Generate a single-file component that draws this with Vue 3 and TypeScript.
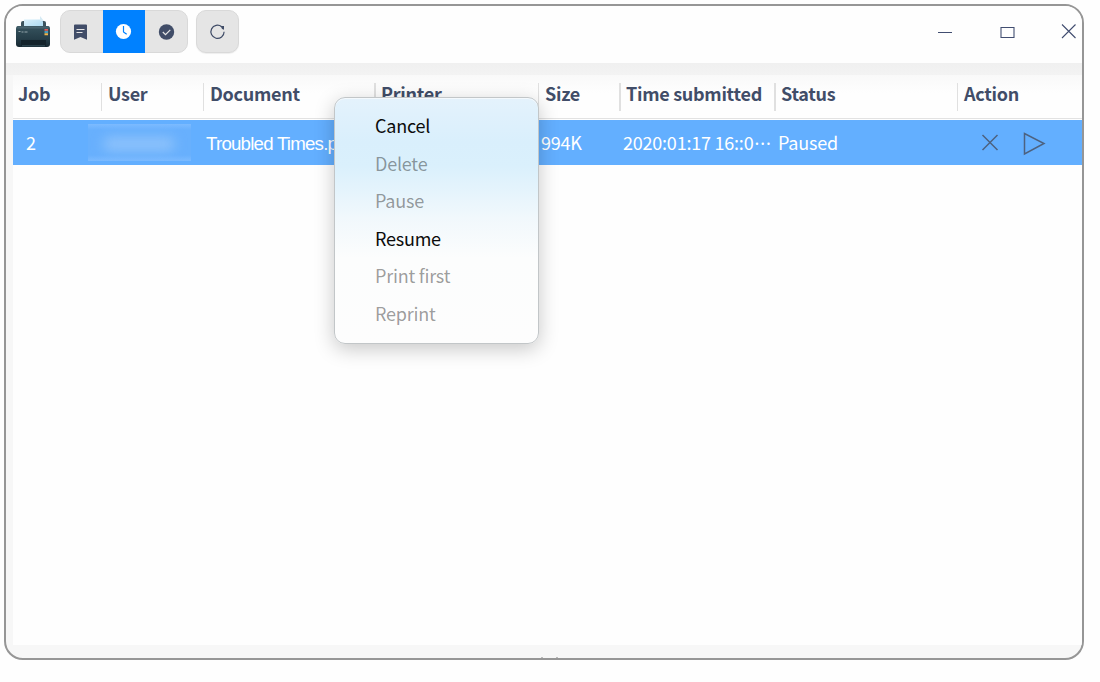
<script setup lang="ts">
interface Column { key: string; label: string }
interface MenuItem { label: string; enabled: boolean }

const columns: Column[] = [
  { key: 'job', label: 'Job' },
  { key: 'user', label: 'User' },
  { key: 'document', label: 'Document' },
  { key: 'printer', label: 'Printer' },
  { key: 'size', label: 'Size' },
  { key: 'time', label: 'Time submitted' },
  { key: 'status', label: 'Status' },
  { key: 'action', label: 'Action' },
]

const menu: MenuItem[] = [
  { label: 'Cancel', enabled: true },
  { label: 'Delete', enabled: false },
  { label: 'Pause', enabled: false },
  { label: 'Resume', enabled: true },
  { label: 'Print first', enabled: false },
  { label: 'Reprint', enabled: false },
]
</script>

<template>
  <main class="window">
    <header class="titlebar">
      <svg class="app-icon" width="36" height="34" viewBox="0 0 36 34">
        <defs>
          <linearGradient id="body" x1="0" y1="0" x2="0" y2="1">
            <stop offset="0" stop-color="#36535e" />
            <stop offset="0.6" stop-color="#263e49" />
            <stop offset="1" stop-color="#172831" />
          </linearGradient>
          <linearGradient id="sheet" x1="0" y1="0" x2="1" y2="1">
            <stop offset="0" stop-color="#d9f0fb" />
            <stop offset="1" stop-color="#a9d8f0" />
          </linearGradient>
        </defs>
        <path d="M6 7q0-2 2-2h21q2 0 2 2v7H6z" fill="#3c535e" />
        <path d="M9 3.500h16l3 2v6H9z" fill="url(#sheet)" />
        <path d="M25 0l4 5h-4z" fill="#d5eaf4" />
        <path d="M3 10h30q2 0 2 3v15q0 3-3 3H4q-3 0-3-3V13q0-3 2-3z" fill="url(#body)" />
        <path d="M3 10.500h30l1 2H2z" fill="#48636e" />
        <path d="M6 24h25v6H6z" fill="#14232b" />
        <path d="M7 29h23v1.500H7z" fill="#2b424c" />
        <path d="M3.500 15.500h2m1 .5h2m1 0h3" stroke="#96a6ad" stroke-width="1" />
        <path d="M29.500 13h3.500v1.800h-3.500z" fill="#e85855" />
        <path d="M29.500 15.300h3.500v1.500h-3.500z" fill="#4eb7e0" />
        <path d="M29.500 17.200h3.500v2h-3.500z" fill="#f3b64a" />
      </svg>
      <nav class="tabs">
        <button class="tab" aria-label="All jobs">
          <svg width="42" height="42" viewBox="0 0 42 42">
            <path d="M13 14.500q0-1 1-1h11q1 0 1 1v14.300l-6.500-2.800-6.500 2.800z" fill="#414d68" />
            <path d="M15.500 18.500h8M15.500 21.500h6" stroke="#e6e6e6" stroke-width="1.200" />
          </svg>
        </button>
        <button class="tab active" aria-label="Queued jobs">
          <svg width="42" height="43" viewBox="0 0 42 43">
            <circle cx="20.500" cy="21.500" r="7.600" fill="#fff" />
            <path d="M20.500 16v6l3.200 2.200" fill="none" stroke="#0081ff" stroke-width="1.200" />
          </svg>
        </button>
        <button class="tab" aria-label="Completed jobs">
          <svg width="42" height="42" viewBox="0 0 42 42">
            <circle cx="21.500" cy="21" r="7.700" fill="#414d68" />
            <path d="M17.800 21l2.700 2.600 4.800-4.800" fill="none" stroke="#e6e6e6" stroke-width="1.200" />
          </svg>
        </button>
      </nav>
      <button class="refresh" aria-label="Refresh">
        <svg width="41" height="41" viewBox="0 0 41 41">
          <path d="M24.700 15.700A6.600 6.600 0 1 0 27.100 20.800" fill="none" stroke="#414d68" stroke-width="1.200" />
          <path d="M23.500 15h3.500v3.700q-2.500-.5-3.500-3.700z" fill="#414d68" />
        </svg>
      </button>
      <div class="controls">
        <svg width="150" height="40" viewBox="0 0 150 40" fill="none" stroke="#414d70" stroke-width="1.100">
          <path d="M6 22.500h14" />
          <path d="M69 17.500h13v10h-13z" />
          <path d="M130 14.500l13.500 13.500M143.500 14.500L130 28" />
        </svg>
      </div>
    </header>

    <div class="band"></div>
    <section class="table">
      <div class="grid head">
        <div v-for="c in columns" :key="c.key" class="th" :class="c.key">{{ c.label }}</div>
      </div>
      <div class="grid row">
        <div class="td number">2</div>
        <div class="td user-cell"><span class="redacted"><i></i></span></div>
        <div class="td doc">Troubled Times.p</div>
        <div class="td"></div>
        <div class="td">994K</div>
        <div class="td">2020:01:17 16::0<span class="dots">···</span></div>
        <div class="td">Paused</div>
        <div class="td actions">
          <svg width="125" height="45" viewBox="0 0 125 45" fill="none" stroke="#4d6280" stroke-width="1.500">
            <path d="M25.500 15l15 15M40.500 15l-15 15" />
            <path d="M67.500 13.500v20.500l19.500-10.500z" />
          </svg>
        </div>
      </div>
    </section>
    <footer class="foot"><i></i><i></i></footer>

    <ul class="menu">
      <li v-for="m in menu" :key="m.label" :class="{ disabled: !m.enabled }">{{ m.label }}</li>
    </ul>
  </main>
</template>

<style>
body {
  background: #fefefe;
}
</style>

<style scoped>
.window {
  position: relative;
  box-sizing: border-box;
  width: 1080px;
  height: 656px;
  margin: 4px;
  border: 2px solid #969696;
  border-radius: 19px;
  background: #f7f7f7;
  overflow: hidden;
  display: flex;
  flex-direction: column;
  font-family: "Noto Sans CJK SC", "Noto Sans", sans-serif;
  font-size: 18px;
}
svg {
  display: block;
}
.titlebar {
  height: 57px;
  flex: none;
  display: flex;
  align-items: flex-start;
  background: #fefefe;
}
.app-icon {
  margin: 10px 9px 0 9px;
}
.tabs {
  box-sizing: border-box;
  display: flex;
  align-items: center;
  width: 128px;
  height: 43px;
  margin-top: 4px;
  border: 1px solid #d9d9d9;
  border-radius: 10px;
  background: #e5e5e5;
}
.tab,
.refresh {
  padding: 0;
  border: 0;
  background: none;
}
.tab {
  width: 42px;
  flex: none;
}
.tab.active {
  background: #0081ff;
}
.refresh {
  box-sizing: border-box;
  width: 43px;
  height: 43px;
  margin: 4px 0 0 8px;
  border: 1px solid #d9d9d9;
  border-radius: 10px;
  background: #e5e5e5;
  box-shadow: 0 1px 1px #eee;
}
.controls {
  margin: 4px 0 0 auto;
  width: 150px;
}
.band {
  height: 12px;
  flex: none;
  background: linear-gradient(#f0f0f0, #f3f3f3);
}
.table {
  flex: 1;
  margin-left: 7px;
  background: #fefefe;
}
.grid {
  display: grid;
  grid-template-columns: 88px 102px 171px 164px 82px 155px 182px 125px;
}
.head {
  box-sizing: border-box;
  height: 44px;
  padding-top: 8px;
  border-bottom: 1px solid #e2e2e2;
  background: linear-gradient(#f9f9f9, #fefefe 18px);
  color: #414d68;
  font-weight: 700;
  letter-spacing: -0.28px;
}
.th {
  box-sizing: border-box;
  height: 28px;
  padding-left: 6px;
  border-left: 1px solid #e0e0e0;
  line-height: 20px;
  white-space: nowrap;
}
.th.job {
  border: 0;
  padding-left: 5px;
}
.th.printer,
.th.time,
.th.status {
  border-left-width: 2px;
  padding-left: 5px;
}
.th.time,
.th.status {
  margin-left: -1px;
}
.row {
  height: 45px;
  margin-top: 1px;
  background: #63afff;
  color: #fff;
  letter-spacing: -0.22px;
}
.td {
  padding-left: 3px;
  line-height: 44px;
  white-space: nowrap;
}
.td.number {
  padding-left: 13px;
}
.td.doc {
  line-height: 47px;
  font-family: "Liberation Sans", sans-serif;
  font-size: 18.7px;
  letter-spacing: -0.78px;
}
.dots {
  margin-left: 1px;
  font-family: "Noto Sans", sans-serif;
  letter-spacing: 1px;
}
.td.actions,
.td.user-cell {
  padding: 0;
}
.redacted {
  display: block;
  width: 103px;
  height: 37px;
  margin: 4px 0 0 -13px;
  background: linear-gradient(#7cbbff, #68b0fd 6px, #68b0fd 31px, #7cbbff);
  overflow: hidden;
}
.redacted i {
  display: block;
  width: 72px;
  height: 14px;
  margin: 13px 0 0 15px;
  border-radius: 7px;
  background: #8dc2fb;
  filter: blur(6px);
}
.foot {
  height: 15px;
  margin-bottom: -2px;
  flex: none;
  display: flex;
  gap: 13px;
  padding-left: 535px;
}
.foot i {
  width: 2px;
  height: 1px;
  margin-top: 12px;
  background: #bbb;
}
.menu {
  position: absolute;
  left: 328px;
  top: 91px;
  box-sizing: border-box;
  width: 205px;
  height: 247px;
  margin: 0;
  padding: 9px 0 0 40px;
  list-style: none;
  border: 1px solid #c2c6c8;
  border-radius: 11px;
  background: linear-gradient(#e4f2fc, #d9effc 45px, #daf0fc 68px, #f1f8fc 120px, #fcfdfd 160px, #fdfdfd);
  box-shadow: 0 5px 20px rgba(0, 0, 0, 0.22), inset 0 1px 0 #f4f9fd;
  color: #0b0b0b;
  letter-spacing: -0.22px;
}
.menu li {
  height: 37.6px;
  line-height: 37.6px;
}
.menu li.disabled {
  color: rgba(0, 0, 0, 0.4);
}
</style>
